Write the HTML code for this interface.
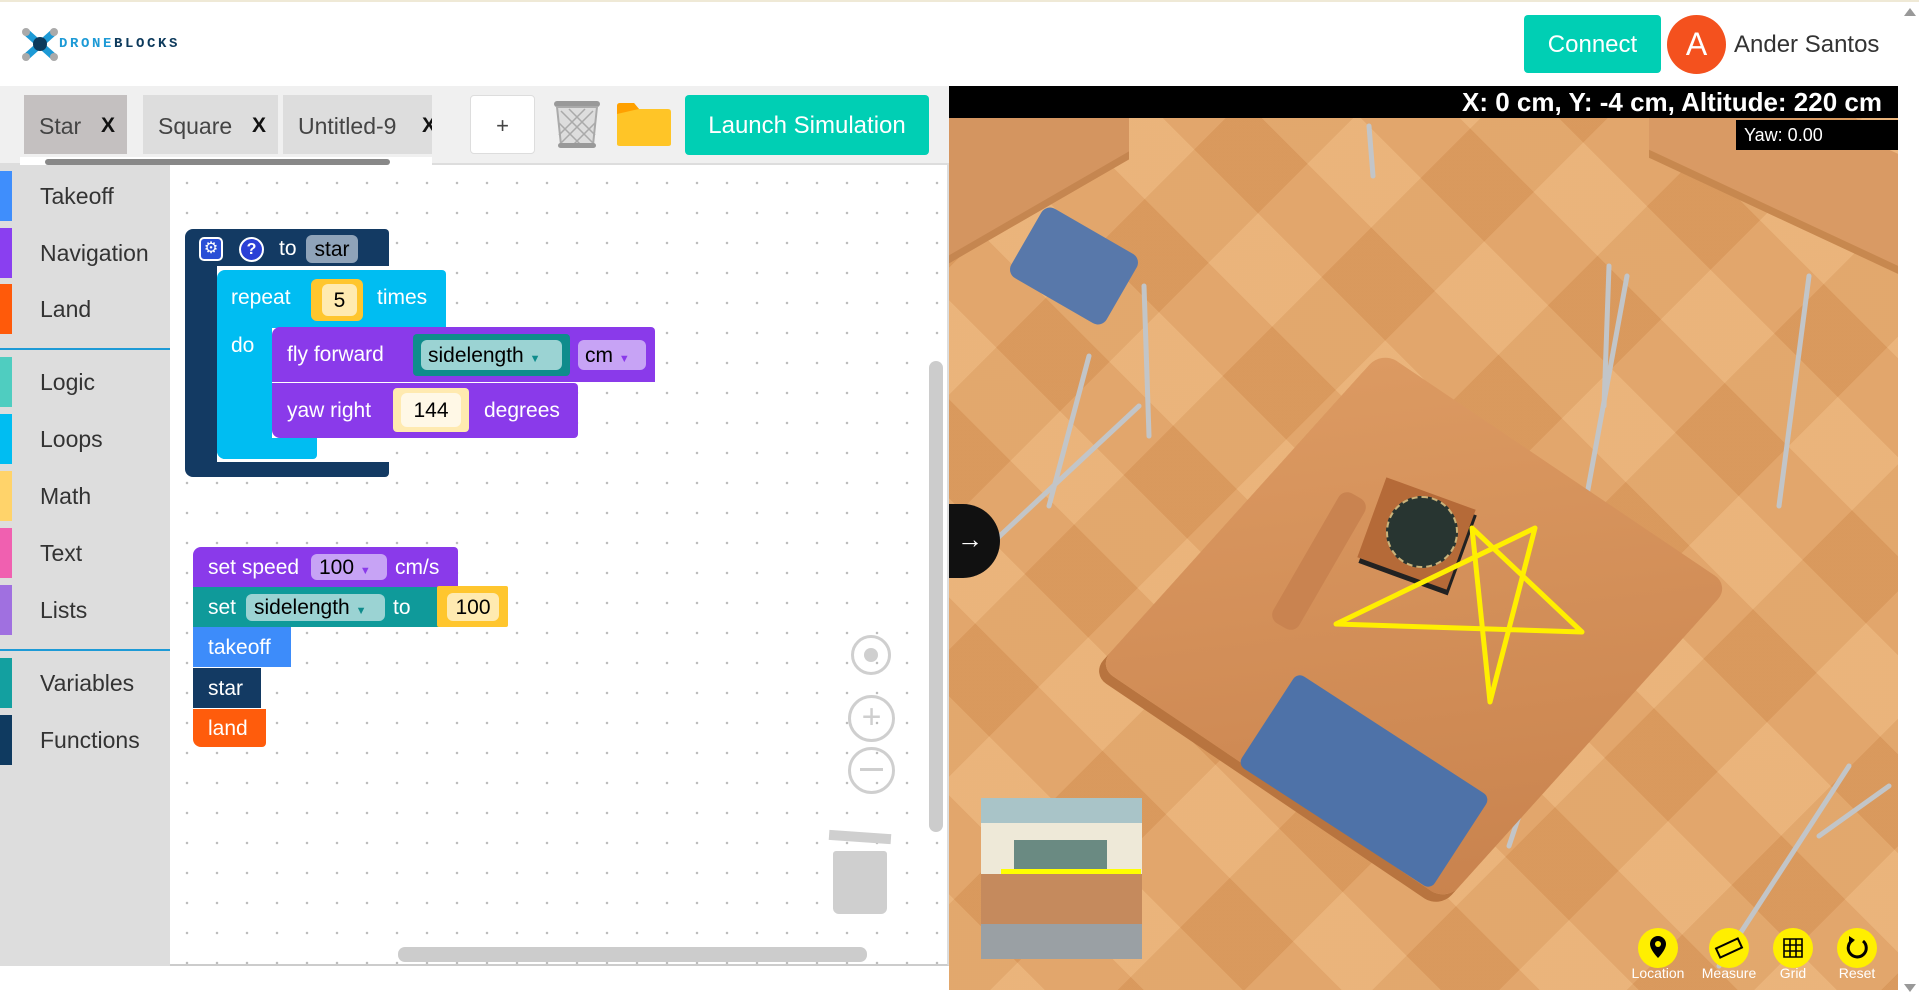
<!DOCTYPE html>
<html><head><meta charset="utf-8"><style>
*{box-sizing:border-box;margin:0;padding:0}
html{width:1919px;height:999px;overflow:hidden}
body{width:1919px;height:999px;overflow:hidden;background:#fff;font-family:"Liberation Sans",Arial,sans-serif;position:relative}
.abs{position:absolute}
.topline{left:0;top:0;width:1919px;height:2px;background:#efe9d6}
.tab{position:absolute;top:95px;height:59px;background:#ddd;font-size:23px;color:#444;line-height:62px;padding-left:15px}
.tab b{position:absolute;right:12px;color:#111;font-weight:bold;font-size:21px}
.tb-item{position:absolute;left:0;width:170px;height:50px;font-size:23px;color:#333;line-height:50px;padding-left:40px}
.tb-item i{position:absolute;left:0;top:0;width:12px;height:50px}
.blk{position:absolute;color:#fff;font-size:21px;white-space:nowrap}
.fld{position:absolute;border-radius:6px;color:#000;font-size:21px;text-align:center}
.circ{position:absolute;border:3px solid #cfcfcf;border-radius:50%}
.tool{position:absolute;top:928px;width:40px;height:40px;border-radius:50%;background:#ffef00;text-align:center}
.tlab{position:absolute;top:965px;font-size:14px;color:#fff;text-align:center;width:80px}
</style></head><body>
<div class="abs topline"></div>
<!-- logo -->
<svg class="abs" style="left:20px;top:27px" width="40" height="35" viewBox="0 0 40 35">
<g stroke="#1d9ad6" stroke-width="7" stroke-linecap="round"><line x1="6" y1="5" x2="34" y2="30"/><line x1="34" y1="5" x2="6" y2="30"/></g>
<circle cx="20" cy="17" r="7" fill="#0d3a5c"/><circle cx="6" cy="5" r="4" fill="#aaa"/><circle cx="34" cy="5" r="4" fill="#aaa"/><circle cx="6" cy="30" r="4" fill="#aaa"/><circle cx="34" cy="30" r="4" fill="#aaa"/></svg>
<div class="abs" style="left:59px;top:36px;font-family:'Liberation Mono',monospace;font-weight:bold;font-size:14px;letter-spacing:2.6px"><span style="color:#1d9ad6">DRONE</span><span style="color:#0d3a5c">BLOCKS</span></div>
<!-- header right -->
<div class="abs" style="left:1524px;top:15px;width:137px;height:58px;background:#00cfb4;border-radius:4px;color:#fff;font-size:24px;line-height:60px;text-align:center">Connect</div>
<div class="abs" style="left:1667px;top:15px;width:59px;height:59px;border-radius:50%;background:#f4511e;color:#fff;font-size:32px;line-height:59px;text-align:center">A</div>
<div class="abs" style="left:1734px;top:31px;font-size:24px;color:#333">Ander Santos</div>
<!-- page scrollbar -->
<div class="abs" style="left:1904px;top:8px;width:0;height:0;border-left:6px solid transparent;border-right:6px solid transparent;border-bottom:8px solid #999"></div>
<div class="abs" style="left:1904px;top:984px;width:0;height:0;border-left:6px solid transparent;border-right:6px solid transparent;border-top:8px solid #999"></div>
<!-- tab bar -->
<div class="abs" style="left:0;top:86px;width:949px;height:79px;background:#f0f0f0;border-bottom:2px solid #ddd"></div>
<div class="tab" style="left:24px;width:103px;background:#c4c0c0">Star<b>X</b></div>
<div class="tab" style="left:143px;width:135px">Square<b>X</b></div>
<div class="tab" style="left:283px;width:149px;overflow:hidden">Untitled-9<b style="right:-4px">X</b></div>
<div class="abs" style="left:20px;top:157px;width:412px;height:8px;background:#fff"></div>
<div class="abs" style="left:45px;top:159px;width:345px;height:6px;background:#888;border-radius:3px"></div>
<div class="abs" style="left:470px;top:95px;width:65px;height:59px;background:#fff;border:1px solid #ddd;border-radius:4px;text-align:center;line-height:60px;font-size:22px;color:#444">+</div>
<svg class="abs" style="left:553px;top:99px" width="48" height="50" viewBox="0 0 48 50"><rect x="1" y="2" width="46" height="6" rx="3" fill="#999"/><path d="M4 8 L8 46 L40 46 L44 8Z" fill="#ddd" stroke="#aaa" stroke-width="2"/><path d="M8 12 L40 44 M16 10 L42 36 M6 24 L28 46 M40 12 L8 44 M32 10 L6 36 M42 24 L20 46" stroke="#aaa" stroke-width="1.5"/><rect x="5" y="44" width="38" height="5" rx="2.5" fill="#999"/></svg>
<svg class="abs" style="left:616px;top:102px" width="56" height="45" viewBox="0 0 56 45"><path d="M1 4 Q1 1 4 1 L18 1 L23 7 L52 7 Q55 7 55 10 L55 42 Q55 44 52 44 L4 44 Q1 44 1 42Z" fill="#ffc527"/><path d="M1 4 Q1 1 4 1 L18 1 L23 7 L1 12Z" fill="#ffa000"/></svg>
<div class="abs" style="left:685px;top:95px;width:244px;height:60px;background:#00cfb4;border-radius:4px;color:#fff;font-size:24px;line-height:62px;text-align:center">Launch Simulation</div>
<!-- toolbox -->
<div class="abs" style="left:0;top:165px;width:170px;height:801px;background:#ddd"></div>
<div class="tb-item" style="top:171px"><i style="background:#3f8efc"></i>Takeoff</div>
<div class="tb-item" style="top:228px"><i style="background:#8a3ff0"></i>Navigation</div>
<div class="tb-item" style="top:284px"><i style="background:#ff5a0a"></i>Land</div>
<div class="abs" style="left:0;top:348px;width:170px;height:2px;background:#1d9ad6"></div>
<div class="tb-item" style="top:357px"><i style="background:#4fcdc0"></i>Logic</div>
<div class="tb-item" style="top:414px"><i style="background:#00bdf2"></i>Loops</div>
<div class="tb-item" style="top:471px"><i style="background:#ffd36a"></i>Math</div>
<div class="tb-item" style="top:528px"><i style="background:#f060b0"></i>Text</div>
<div class="tb-item" style="top:585px"><i style="background:#a070e0"></i>Lists</div>
<div class="abs" style="left:0;top:649px;width:170px;height:2px;background:#1d9ad6"></div>
<div class="tb-item" style="top:658px"><i style="background:#13a0a0"></i>Variables</div>
<div class="tb-item" style="top:715px"><i style="background:#0f3a60"></i>Functions</div>
<!-- workspace -->
<div class="abs" style="left:170px;top:165px;width:779px;height:801px;background-color:#fff;background-image:radial-gradient(circle,#bbb 1px,transparent 1.5px);background-size:30px 30px;background-position:2px 3px;border-bottom:2px solid #ccc;border-right:2px solid #ddd"></div>
<!-- function block -->
<div class="blk" style="left:185px;top:229px;width:204px;height:248px;background:#133a63;border-radius:8px 4px 4px 8px"></div>
<div class="abs" style="left:217px;top:266px;width:172px;height:196px;background:#fff"></div>
<div class="abs" style="left:199px;top:237px;width:24px;height:24px;border:2px solid #fff;border-radius:5px;background:#2a4fd6;color:#fff;font-size:16px;text-align:center;line-height:20px">⚙</div>
<div class="abs" style="left:239px;top:237px;width:25px;height:25px;border:2px solid #fff;border-radius:50%;background:#2a3fd6;color:#fff;font-size:16px;text-align:center;line-height:21px;font-weight:bold">?</div>
<div class="blk" style="left:279px;top:237px">to</div>
<div class="fld" style="left:306px;top:235px;width:52px;height:28px;background:#8fa3b9;line-height:30px">star</div>
<!-- repeat -->
<div class="blk" style="left:217px;top:270px;width:229px;height:58px;background:#00bdf2;border-radius:8px 4px 0 0"></div>
<div class="blk" style="left:217px;top:328px;width:55px;height:131px;background:#00bdf2;border-radius:0 0 0 8px"></div>
<div class="blk" style="left:217px;top:438px;width:100px;height:21px;background:#00bdf2;border-radius:0 0 4px 8px"></div>
<div class="blk" style="left:231px;top:286px">repeat</div>
<div class="fld" style="left:311px;top:279px;width:52px;height:42px;background:#ffc62e"></div>
<div class="fld" style="left:322px;top:284px;width:35px;height:32px;background:#ffeab0;line-height:33px">5</div>
<div class="blk" style="left:377px;top:286px">times</div>
<div class="blk" style="left:231px;top:334px">do</div>
<!-- fly forward -->
<div class="blk" style="left:272px;top:327px;width:383px;height:55px;background:#8a3aea;border-radius:8px 4px 0 0"></div>
<div class="blk" style="left:287px;top:343px">fly forward</div>
<div class="fld" style="left:413px;top:334px;width:157px;height:42px;background:#0f8c8c;border-radius:4px"></div>
<div class="fld" style="left:421px;top:340px;width:141px;height:30px;background:#9bd3d3;line-height:31px;text-align:left;padding-left:7px">sidelength <span style="font-size:11px;color:#0f8c8c">▼</span></div>
<div class="fld" style="left:578px;top:340px;width:68px;height:30px;background:#c7a3f5;line-height:31px;text-align:left;padding-left:7px">cm <span style="font-size:11px;color:#8a3aea">▼</span></div>
<!-- yaw right -->
<div class="blk" style="left:272px;top:383px;width:306px;height:55px;background:#8a3aea;border-radius:0 4px 4px 8px"></div>
<div class="blk" style="left:287px;top:399px">yaw right</div>
<div class="fld" style="left:393px;top:388px;width:76px;height:44px;background:#ffeab0;border-radius:4px"></div>
<div class="fld" style="left:401px;top:393px;width:60px;height:34px;background:#fff8e6;line-height:35px">144</div>
<div class="blk" style="left:484px;top:399px">degrees</div>
<!-- bottom stack -->
<div class="blk" style="left:193px;top:547px;width:265px;height:40px;background:#8a3aea;border-radius:8px 4px 0 0;padding:9px 0 0 15px">set speed</div>
<div class="fld" style="left:311px;top:554px;width:76px;height:26px;background:#c7a3f5;line-height:27px;text-align:left;padding-left:8px">100 <span style="font-size:11px;color:#8a3aea">▼</span></div>
<div class="blk" style="left:395px;top:556px">cm/s</div>
<div class="blk" style="left:193px;top:587px;width:265px;height:40px;background:#0f9a9a;padding:9px 0 0 15px">set</div>
<div class="fld" style="left:246px;top:594px;width:139px;height:27px;background:#9bd3d3;line-height:28px;text-align:left;padding-left:8px">sidelength <span style="font-size:11px;color:#0f8c8c">▼</span></div>
<div class="blk" style="left:393px;top:596px">to</div>
<div class="fld" style="left:437px;top:586px;width:71px;height:41px;background:#ffc62e;border-radius:2px"></div>
<div class="fld" style="left:447px;top:593px;width:52px;height:28px;background:#ffeab0;line-height:29px">100</div>
<div class="blk" style="left:193px;top:627px;width:98px;height:40px;background:#3d8cfa;padding:9px 0 0 15px">takeoff</div>
<div class="blk" style="left:193px;top:668px;width:68px;height:40px;background:#133a63;padding:9px 0 0 15px">star</div>
<div class="blk" style="left:193px;top:709px;width:73px;height:38px;background:#ff5c0c;border-radius:0 0 4px 8px;padding:8px 0 0 15px">land</div>
<!-- zoom controls -->
<div class="circ" style="left:851px;top:635px;width:40px;height:40px"></div>
<div class="abs" style="left:864px;top:648px;width:14px;height:14px;border-radius:50%;background:#cfcfcf"></div>
<div class="circ" style="left:848px;top:695px;width:47px;height:47px;text-align:center;line-height:38px;font-size:34px;color:#cfcfcf">+</div>
<div class="circ" style="left:848px;top:747px;width:47px;height:47px"></div>
<div class="abs" style="left:860px;top:768px;width:23px;height:3px;background:#cfcfcf"></div>
<div class="abs" style="left:829px;top:832px;width:62px;height:10px;background:#cfcfcf;transform:rotate(4deg)"></div>
<div class="abs" style="left:833px;top:851px;width:54px;height:63px;background:#cfcfcf;border-radius:3px 3px 6px 6px"></div>
<div class="abs" style="left:929px;top:361px;width:14px;height:471px;background:#ccc;border-radius:7px"></div>
<div class="abs" style="left:398px;top:947px;width:469px;height:15px;background:#ccc;border-radius:7px"></div>
<!-- simulation -->
<div class="abs" style="left:949px;top:86px;width:949px;height:904px;overflow:hidden;background:#e2a468">
<div class="abs" style="left:-300px;top:-300px;width:1600px;height:1600px;background:repeating-linear-gradient(45deg,rgba(200,130,70,.18) 0 70px,rgba(255,220,170,.18) 70px 140px)"></div>
<div class="abs" style="left:-300px;top:-300px;width:1600px;height:1600px;background:repeating-linear-gradient(-45deg,rgba(255,215,165,.15) 0 90px,rgba(190,120,60,.12) 90px 180px)"></div>
<!-- top-left desk -->
<div class="abs" style="left:-120px;top:-40px;width:300px;height:200px;background:#d49560;transform:skewY(-30deg);border-bottom:8px solid #c58650"></div>
<div class="abs" style="left:70px;top:140px;width:110px;height:80px;background:#5878aa;transform:rotate(30deg);border-radius:10px"></div>
<!-- top-right desk -->
<div class="abs" style="left:700px;top:10px;width:250px;height:120px;background:#d99a64;transform:skewY(25deg);border-bottom:8px solid #c7884f"></div>
<!-- legs -->
<svg class="abs" style="left:0;top:0" width="949" height="904"><g stroke="#c2c5c8" stroke-width="5" fill="none" stroke-linecap="round">
<path d="M420 40 L424 90 M678 190 L635 425 M860 190 L830 420 M660 180 L655 320 M40 460 L190 320 M195 200 L200 350 M140 270 L100 420"/>
<path d="M370 370 Q345 380 330 410 L300 540 M900 680 L770 880 M580 700 L560 760 M870 750 L940 700"/></g></svg>
<!-- center desk -->
<div class="abs" style="left:255px;top:330px;width:420px;height:420px;background:linear-gradient(135deg,#dc9a62,#c9834e);transform:rotate(34deg) skewX(-8deg);border-radius:18px;box-shadow:0 10px 0 #b8743f"></div>
<div class="abs" style="left:300px;top:640px;width:230px;height:110px;background:#4e72a8;transform:rotate(33deg);border-radius:8px"></div>
<div class="abs" style="left:355px;top:400px;width:30px;height:150px;background:#c98350;transform:rotate(30deg);border-radius:10px"></div>
<!-- drone pad -->
<div class="abs" style="left:420px;top:405px;width:95px;height:85px;background:#b56a38;transform:rotate(20deg);box-shadow:3px 5px 0 #222"></div>
<div class="abs" style="left:437px;top:410px;width:72px;height:72px;border-radius:50%;background:#283531;border:2px dashed #c9b27a"></div>
<svg class="abs" style="left:0;top:0" width="949" height="904"><polygon points="523,442 633,546 387,538 586,442 541,616" fill="none" stroke="#ffef00" stroke-width="5" stroke-linejoin="round"/></svg>
<!-- arrow tab -->
<div class="abs" style="left:-2px;top:418px;width:53px;height:74px;background:#111;border-radius:0 37px 37px 0;color:#fff;font-size:26px;line-height:70px;padding-left:10px">→</div>
<!-- minimap -->
<div class="abs" style="left:32px;top:712px;width:161px;height:161px;background:#9aa0a4;overflow:hidden">
<div class="abs" style="left:0;top:0;width:161px;height:40px;background:#a9c4c8"></div>
<div class="abs" style="left:0;top:25px;width:161px;height:60px;background:#eee9d8"></div>
<div class="abs" style="left:33px;top:42px;width:93px;height:30px;background:#6a8a82"></div>
<div class="abs" style="left:20px;top:71px;width:140px;height:5px;background:#ffff00"></div>
<div class="abs" style="left:0;top:76px;width:161px;height:50px;background:#c58a5d"></div>
</div>
<!-- coord bar -->
<div class="abs" style="left:0;top:0;width:949px;height:32px;background:#000;color:#fff;font-size:26px;font-weight:bold;text-align:right;padding-right:16px;line-height:32px">X: 0 cm, Y: -4 cm, Altitude: 220 cm</div>
<div class="abs" style="left:787px;top:34px;width:162px;height:30px;background:#000;color:#fff;font-size:18px;line-height:30px;padding-left:8px">Yaw: 0.00</div>
</div>
<!-- bottom tools -->
<div class="tool" style="left:1638px"><svg width="40" height="40" viewBox="0 0 40 40"><path d="M20 8a8 8 0 0 1 8 8c0 6-8 14-8 14s-8-8-8-14a8 8 0 0 1 8-8z" fill="#000"/><circle cx="20" cy="16" r="3" fill="#ffef00"/></svg></div>
<div class="tool" style="left:1709px"><svg width="40" height="40" viewBox="0 0 40 40"><rect x="8" y="15" width="24" height="10" transform="rotate(-25 20 20)" fill="none" stroke="#000" stroke-width="2"/></svg></div>
<div class="tool" style="left:1773px"><svg width="40" height="40" viewBox="0 0 40 40"><path d="M11 11h18v18H11z M17 11v18 M23 11v18 M11 17h18 M11 23h18" fill="none" stroke="#000" stroke-width="1.6"/></svg></div>
<div class="tool" style="left:1837px"><svg width="40" height="40" viewBox="0 0 40 40"><path d="M26 13a9 9 0 1 1-10-1" fill="none" stroke="#000" stroke-width="3"/><path d="M12 8l6 4-6 4z" fill="#000"/></svg></div>
<div class="tlab" style="left:1618px">Location</div>
<div class="tlab" style="left:1689px">Measure</div>
<div class="tlab" style="left:1753px">Grid</div>
<div class="tlab" style="left:1817px">Reset</div>
</body></html>
